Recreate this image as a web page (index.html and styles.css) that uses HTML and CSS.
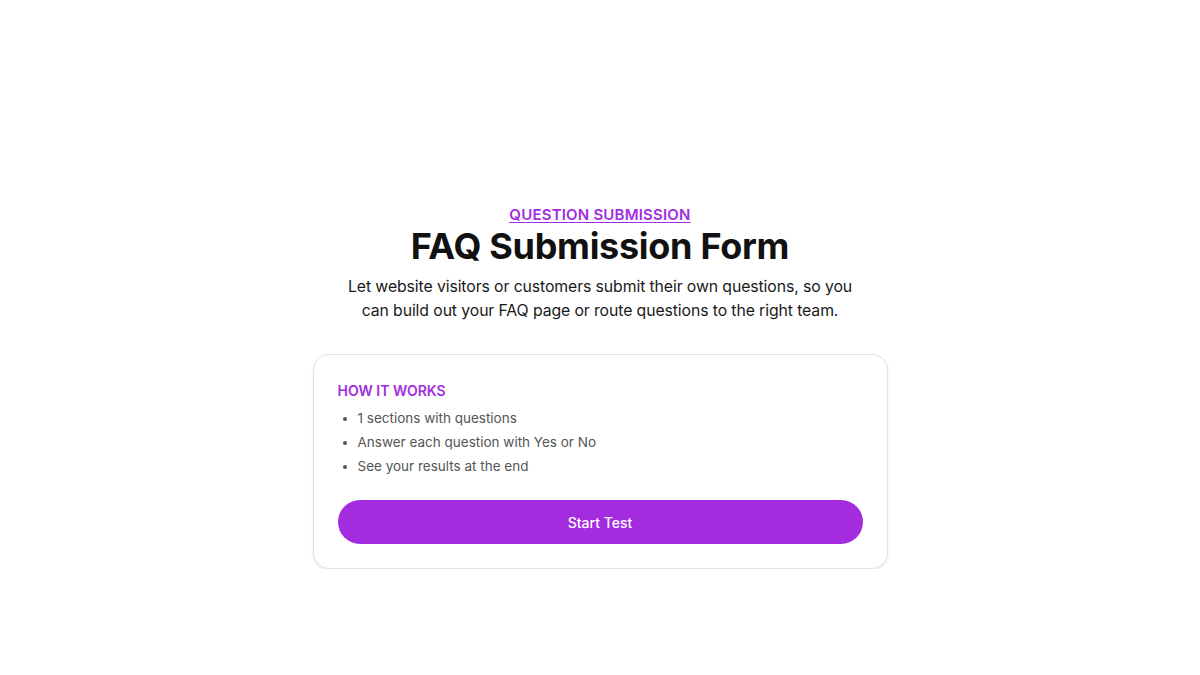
FILE: index.html
```html
<!DOCTYPE html>
<html lang="en">
<head>
<meta charset="utf-8">
<title>FAQ Submission Form</title>
<link rel="stylesheet" href="styles.css">
</head>
<body>
<main class="page">
  <header class="intro">
    <a class="eyebrow" href="#">QUESTION SUBMISSION</a>
    <h1 class="title">FAQ Submission Form</h1>
    <p class="lead">Let website visitors or customers submit their own questions, so you can build out your FAQ page or route questions to the right team.</p>
  </header>
  <section class="card">
    <h2 class="card-heading">HOW IT WORKS</h2>
    <ul class="steps">
      <li>1 sections with questions</li>
      <li>Answer each question with Yes or No</li>
      <li>See your results at the end</li>
    </ul>
    <button class="start" type="button">Start Test</button>
  </section>
</main>
</body>
</html>
```

FILE: styles.css
```css
* { box-sizing: border-box; }

html, body {
  margin: 0;
  padding: 0;
  background: #ffffff;
}

body {
  font-family: "Inter", "Noto Sans", sans-serif;
  color: #111111;
}

.page {
  display: flex;
  flex-direction: column;
  align-items: center;
  padding-top: 205px;
}

.intro {
  display: flex;
  flex-direction: column;
  align-items: center;
  text-align: center;
  width: 530px;
}

.eyebrow {
  color: #a12ddf;
  font-size: 15px;
  font-weight: 600;
  line-height: 19px;
  letter-spacing: 0.2px;
  text-decoration: underline;
  text-underline-offset: 2px;
}

.title {
  margin: 0;
  font-size: 36px;
  font-weight: 700;
  line-height: 44px;
  letter-spacing: -0.3px;
  color: #111111;
}

.lead {
  margin: 7px 0 0;
  font-size: 15.8px;
  line-height: 24px;
  color: #1a1a1a;
  letter-spacing: -0.1px;
}

.card {
  margin-top: 31px;
  width: 575px;
  padding: 26px 24px 24px;
  border: 1px solid #e3e3e3;
  border-radius: 16px;
  background: #ffffff;
  box-shadow: 0 1px 3px rgba(0, 0, 0, 0.1);
}

.card-heading {
  margin: 0;
  font-size: 14px;
  font-weight: 600;
  line-height: 20px;
  color: #a12ddf;
}

.steps {
  margin: 5px 0 0;
  padding-left: 20px;
  font-size: 13.5px;
  line-height: 24px;
  color: #555555;
}

.start {
  display: block;
  width: 100%;
  height: 44px;
  margin-top: 22px;
  border: 0;
  border-radius: 999px;
  background: #a32cdf;
  color: #ffffff;
  font-family: inherit;
  font-size: 14px;
  font-weight: 500;
  cursor: pointer;
}
```
